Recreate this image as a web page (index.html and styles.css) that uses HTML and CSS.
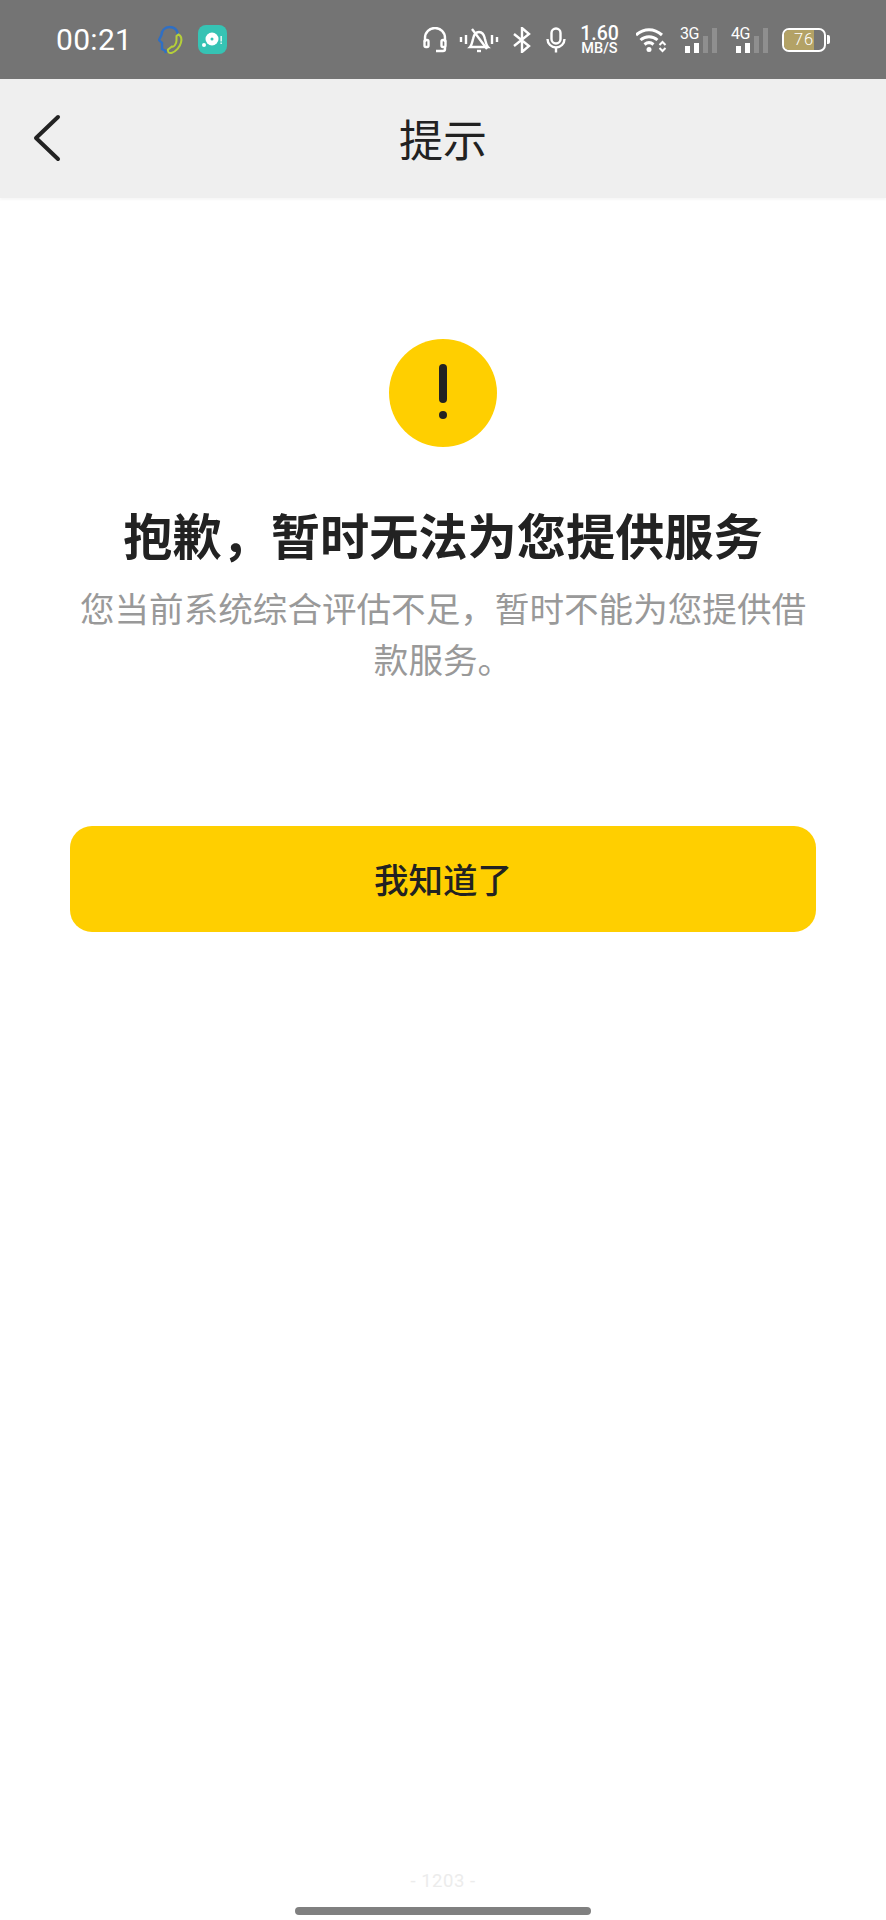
FILE: index.html
```html
<!DOCTYPE html>
<html lang="zh">
<head>
<meta charset="utf-8">
<title>提示</title>
<link rel="stylesheet" href="styles.css">
</head>
<body>
<div class="page">
  <header class="status">
    <span class="time">00:21</span>
    <svg class="ic-call" width="28" height="32" viewBox="0 0 28 32" fill="none">
      <path d="M20 10C19 5 16 3 11.500 3 6.500 3 3.500 7 3.500 11L1 16l3 3v6l3 1.500 1 2.500" stroke="#2f6fc4" stroke-width="2.400"/>
      <path d="M18.500 12l2-1.500c2 1 3.500 4 2.500 8-1 4.500-5 9-9.500 10.500-2.500.5-4-1-3.500-3.500l4-3c1 .5 2 0 3-1.500 1-1.500 1.500-3 1.500-4.500z" stroke="#b5cf3a" stroke-width="2"/>
    </svg>
    <svg class="ic-app" width="29" height="29" viewBox="0 0 29 29">
      <rect width="29" height="29" rx="8" fill="#36c3b4"/>
      <circle cx="14" cy="14" r="6.500" fill="#fff"/>
      <circle cx="14" cy="14" r="1.500" fill="#36c3b4"/>
      <circle cx="6" cy="20" r="2" fill="#fff"/>
      <rect x="22.500" y="11" width="1.300" height="5.500" fill="#fff"/>
      <rect x="22.500" y="17.500" width="1.300" height="1.500" fill="#fff"/>
    </svg>
    <span class="spacer"></span>
    <svg class="ic ic-head" width="24" height="26" viewBox="0 0 24 26" fill="none" stroke="#fff" stroke-width="2.400">
      <path d="M2 15V11a10 10 0 0 1 20 0v4"/>
      <rect x="1.500" y="13" width="4" height="7" rx="1.500"/>
      <rect x="18.500" y="13" width="4" height="7" rx="1.500"/>
      <path d="M22 20v2a2 2 0 0 1-2 2h-7"/>
    </svg>
    <svg class="ic ic-bell" width="40" height="26" viewBox="0 0 40 26" fill="none" stroke="#fff" stroke-width="2.400">
      <path d="M2 10v5M7 8v9M33 8v9M38 10v5"/>
      <path d="M11 20c2-2 2-4 3-8 1-5 3-7 6-7s5 2 6 7c1 4 1 6 3 8z"/>
      <path d="M13 2l15 20"/>
      <path d="M18 24h4"/>
    </svg>
    <svg class="ic ic-bt" width="20" height="26" viewBox="0 0 20 26" fill="none" stroke="#fff" stroke-width="2.400">
      <path d="M2 7l15 12-7 6V1l7 6L2 19"/>
    </svg>
    <svg class="ic ic-mic" width="20" height="26" viewBox="0 0 20 26" fill="none" stroke="#fff" stroke-width="2.400">
      <rect x="5.500" y="1.500" width="9" height="15" rx="4.500"/>
      <path d="M1.500 12a8.500 8.500 0 0 0 17 0M10 20.500v5"/>
    </svg>
    <span class="speed"><b>1.60</b><i>MB/S</i></span>
    <svg class="ic ic-wifi" width="32" height="26" viewBox="0 0 32 26" fill="none" stroke="#fff" stroke-width="3">
      <path d="M0 8c8-7 18-7 26 0M4.500 13c5-4.500 12-4.500 17 0M8.500 17.500c3-2.500 6-2.500 9 0"/>
      <circle cx="13" cy="22.500" r="2.500" fill="#fff" stroke="none"/>
      <path d="M23.500 18l3-3 3 3M23.500 21l3 3 3-3" stroke-width="2"/>
    </svg>
    <div class="net"><span class="net-label">3G</span><span class="bars"><s></s><s class="b2"></s><s class="b3 off"></s><s class="b4 off"></s></span></div>
    <div class="net"><span class="net-label">4G</span><span class="bars"><s></s><s class="b2"></s><s class="b3 off"></s><s class="b4 off"></s></span></div>
    <div class="battery"><div class="cell"><span class="fill"></span><span class="pct">76</span></div><span class="nub"></span></div>
  </header>

  <nav class="nav">
    <svg class="back" width="30" height="48" viewBox="0 0 30 48" fill="none">
      <path d="M26 3L4 24l22 21" stroke="#222" stroke-width="4" stroke-linecap="round" stroke-linejoin="round"/>
    </svg>
    <h1 class="nav-title">提示</h1>
  </nav>

  <main class="main">
    <div class="alert">
      <span class="alert-bar"></span>
      <span class="alert-dot"></span>
    </div>
    <h2 class="title">抱歉，暂时无法为您提供服务</h2>
    <p class="desc">您当前系统综合评估不足，暂时不能为您提供借款服务。</p>
    <button class="btn">我知道了</button>
  </main>

  <footer class="foot">
    <span class="ver">- 1203 -</span>
    <span class="home"></span>
  </footer>
</div>
</body>
</html>
```
FILE: styles.css
```css
* { box-sizing: border-box; }
html, body { margin: 0; padding: 0; background: #fff; }
body { font-family: "Noto Sans CJK SC", "Noto Sans", sans-serif; }
.page { width: 886px; height: 1920px; display: flex; flex-direction: column; overflow: hidden; }

.status { height: 79px; flex: none; background: #747474; display: flex; align-items: center; padding: 0 56px; color: #fff; }
.time { font-family: Roboto, sans-serif; font-size: 30px; width: 102px; letter-spacing: 0.300px; }
.ic-call { margin-right: 12px; }
.spacer { flex: 1; }
.ic { flex: none; }
.ic-head { margin-right: 12px; }
.ic-bell { margin-right: 13px; }
.ic-bt { margin-right: 14px; }
.ic-mic { margin-right: 15px; }
.ic-wifi { margin-right: 12px; }
.speed { display: flex; flex-direction: column; align-items: center; width: 37px; margin-right: 18px; font-family: Roboto, sans-serif; line-height: 1; }
.speed b { font-size: 19.500px; font-weight: 500; line-height: 17px; }
.speed i { font-size: 14.500px; font-style: normal; font-weight: 500; line-height: 13px; white-space: nowrap; }
.net { position: relative; width: 37px; height: 26px; margin-right: 14px; flex: none; }
.net-label { position: absolute; left: 0; top: 0; font-family: Roboto, sans-serif; font-size: 16px; line-height: 14px; letter-spacing: -0.500px; }
.bars { position: absolute; left: 5px; right: 0; bottom: 0; display: flex; align-items: flex-end; gap: 4px; }
.bars s { display: block; width: 5px; height: 7px; background: #fff; }
.bars .b2 { height: 10px; }
.bars .b3 { height: 17px; }
.bars .b4 { height: 25px; }
.bars .off { background: #8f8f8f; }
.battery { display: flex; align-items: center; flex: none; }
.cell { position: relative; width: 44px; height: 24px; border: 2.500px solid #fff; border-radius: 7px; overflow: hidden; display: flex; align-items: center; justify-content: center; }
.fill { position: absolute; left: 0; top: 0; bottom: 0; width: 76%; background: #b3a266; }
.pct { position: relative; font-family: Roboto, sans-serif; font-size: 16.500px; font-weight: 300; letter-spacing: 0.800px; color: #fff; }
.nub { width: 3px; height: 9px; background: #fff; border-radius: 0 2px 2px 0; margin-left: 1px; }

.nav { position: relative; height: 119px; flex: none; background: #efefef; display: flex; align-items: center; justify-content: center; padding-bottom: 2px; box-shadow: 0 2px 2px #f7f7f7; }
.back { position: absolute; left: 32px; top: 35px; }
.nav-title { margin: 0; font-size: 44px; font-weight: 400; color: #222; line-height: 1; }

.main { flex: 1; display: flex; flex-direction: column; align-items: center; padding-top: 141px; }
.alert { width: 108px; height: 108px; border-radius: 50%; background: #ffcf00; display: flex; flex-direction: column; align-items: center; padding-top: 25px; }
.alert-bar { width: 8px; height: 39px; background: #222; border-radius: 4px; }
.alert-dot { width: 8px; height: 8px; background: #222; border-radius: 50%; margin-top: 8px; }
.title { margin: 52px 0 0; font-size: 49.200px; line-height: 70px; font-weight: 700; color: #222; white-space: nowrap; }
.desc { margin: 13px 0 0; width: 740px; font-size: 34.600px; line-height: 51px; color: #999; text-align: center; }
.btn { margin-top: 142px; width: 746px; height: 106px; padding: 0 0 3px; border: 0; border-radius: 22px; background: #ffcf00; color: #222; font-family: inherit; font-size: 34.500px; font-weight: 500; }

.foot { flex: none; height: 49px; display: flex; flex-direction: column; align-items: center; }
.ver { font-family: Roboto, sans-serif; font-size: 18.500px; line-height: 20px; color: #ececec; letter-spacing: 0.500px; }
.home { margin-top: 16px; width: 296px; height: 8px; border-radius: 4px; background: #808080; }
```
